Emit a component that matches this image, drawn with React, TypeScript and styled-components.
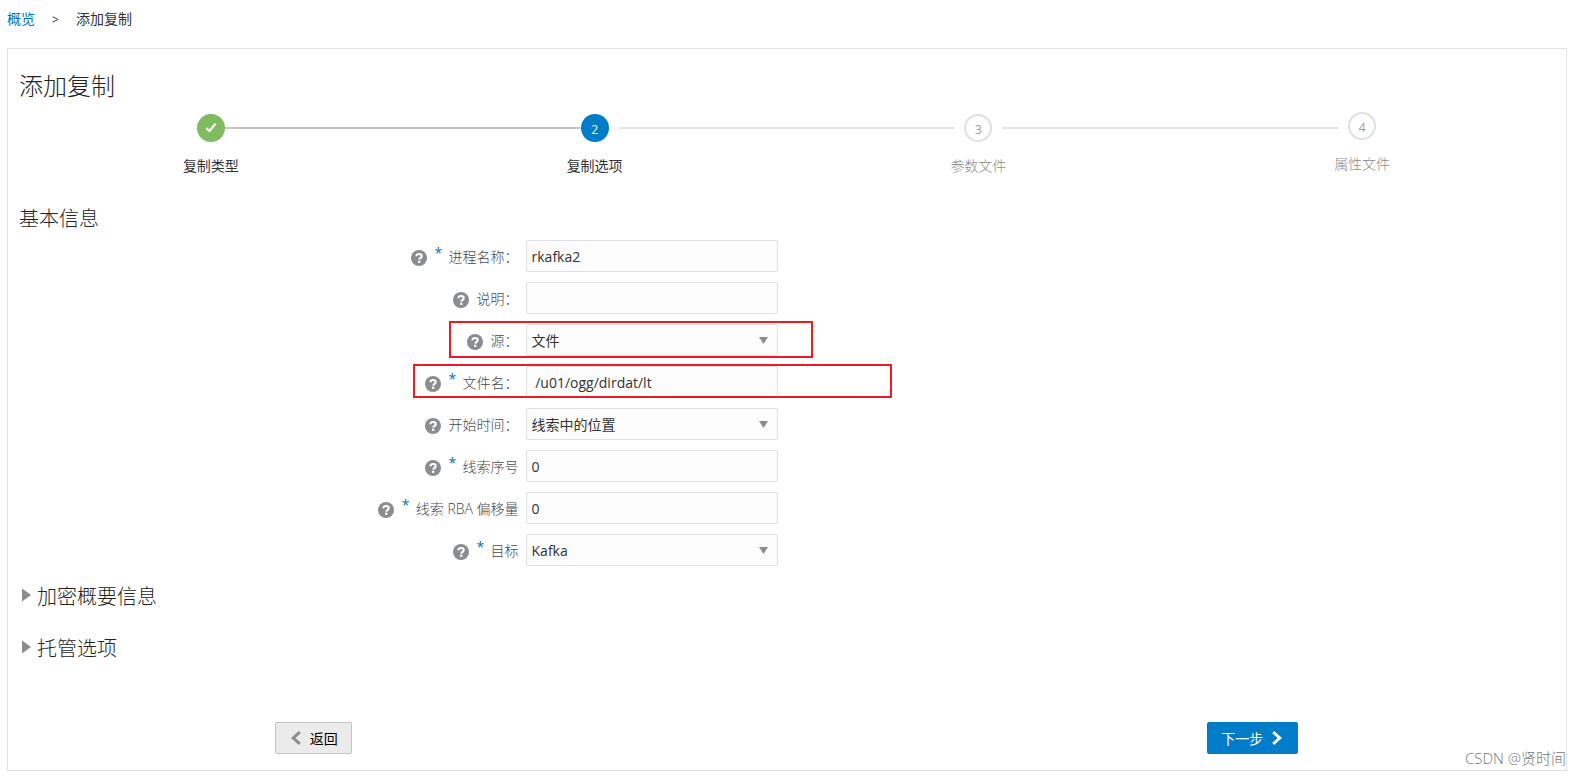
import React, { useState } from "react";
import styled, { createGlobalStyle, css } from "styled-components";

const GlobalStyle = createGlobalStyle`
  *, *::before, *::after { box-sizing: border-box; }
  body {
    margin: 0;
    background: #fff;
    color: #333;
    font-family: "Open Sans", "Noto Sans CJK SC", sans-serif;
    font-size: 14px;
    font-weight: 300;
    line-height: 20px;
  }
  button, input, select { font: inherit; color: inherit; margin: 0; }
  h1, h2, ol { margin: 0; padding: 0; font-weight: 300; }
`;

const Page = styled.div`
  padding: 9px 13px 5px 7px;
`;

const Breadcrumb = styled.nav`
  display: flex;
  align-items: center;
  gap: 16px;
  margin-bottom: 19px;
  font-weight: 400;
`;

const Crumb = styled.a`
  color: #0572b8;
  text-decoration: none;
`;

const Separator = styled.span`
  width: 9px;
  padding-top: 2px;
  font-size: 12px;
  line-height: 18px;
  text-align: center;
`;

const Panel = styled.main`
  position: relative;
  border: 1px solid #dfe1e2;
  padding: 19px 12px 16px 11px;
`;

const Title = styled.h1`
  color: #222;
  font-size: 24px;
  line-height: 36px;
`;

const SectionTitle = styled.h2`
  color: #222;
  font-size: 20px;
  line-height: 28px;
`;

/* Train of steps */
const Train = styled.ol`
  display: flex;
  align-items: flex-start;
  margin: 8px 0 29px;
  list-style: none;
`;

type StepState = "done" | "current" | "todo" | "last";

const isReached = (s: StepState) => s === "done" || s === "current";

const StepItem = styled.li<{ $state: StepState }>`
  flex: 1 1 0;
  min-width: 0;
  display: flex;
  flex-direction: column;
  gap: 14px;
  align-items: center;
  padding-top: ${({ $state }) => ($state === "last" ? 0 : 2)}px;
  color: ${({ $state }) => (isReached($state) ? "#333" : "#8c8c8c")};
`;

const StepTrack = styled.div`
  align-self: stretch;
  display: grid;
  grid-template-columns: 1fr auto 1fr;
  align-items: center;
`;

type Tone = "none" | "dark" | "light";

const toneColor: Record<Tone, string> = {
  none: "transparent",
  dark: "#c4c4c4",
  light: "#e4e4e4",
};

const Connector = styled.span<{ $tone: Tone; $low?: boolean }>`
  height: 2px;
  margin-top: ${({ $low }) => ($low ? 4 : 0)}px;
  background: ${({ $tone }) => toneColor[$tone]};
`;

const LeadConnector = styled(Connector)`
  margin-right: ${({ $tone }) => ($tone === "dark" ? 0 : 10)}px;
`;

const TailConnector = styled(Connector)`
  margin-left: ${({ $tone }) => ($tone === "dark" ? 0 : 10)}px;
`;

const StepDot = styled.span<{ $state: StepState }>`
  display: flex;
  align-items: center;
  justify-content: center;
  width: 28px;
  height: 28px;
  padding-top: ${({ $state }) => ($state === "done" ? 0 : 3)}px;
  border-radius: 50%;
  font-size: 12px;
  line-height: 16px;
  font-weight: 400;
  ${({ $state }) =>
    $state === "done"
      ? css`background: #81bb5f; color: #fff;`
      : $state === "current"
        ? css`background: #007cc8; color: #fff;`
        : css`border: 2px solid #e0e0e0; color: #9a9a9a;`}
`;

const StepLabel = styled.span<{ $strong: boolean }>`
  font-weight: ${({ $strong }) => ($strong ? 400 : 300)};
`;

/* Form */
const Form = styled.form`
  display: flex;
  flex-direction: column;
  gap: 10px;
  margin: 7px 0 17px;
`;

const Row = styled.div`
  display: flex;
  align-items: center;
`;

const LabelCell = styled.div`
  flex: 0 0 33%;
  display: flex;
  justify-content: flex-end;
  align-items: center;
  padding: 2px 7px 0 0;
  color: #45494c;
`;

const HelpButton = styled.button`
  display: block;
  border: 0;
  padding: 0;
  margin: 2px 8px 0 0;
  width: 16px;
  height: 16px;
  background: none;
`;

const Required = styled.span`
  width: 14px;
  height: 20px;
  color: #0572b8;
  font-weight: 400;
  line-height: 12px;
`;

const Control = styled.div`
  position: relative;
  width: 252px;
`;

const field = css`
  display: block;
  width: 100%;
  height: 32px;
  border: 1px solid #dfe1e2;
  border-radius: 2px;
  background: #fcfcfc;
  color: #333;
  font-weight: 400;
  outline: none;
`;

const TextInput = styled.input`
  ${field}
  padding: 0 5px;
`;

const Select = styled.select`
  ${field}
  padding: 2px 5px 0;
  appearance: none;
`;

const Arrow = styled.svg`
  position: absolute;
  right: 10px;
  top: 13px;
  pointer-events: none;
`;

const Highlight = styled.span<{ $wide: boolean }>`
  position: absolute;
  pointer-events: none;
  border: 2px solid #ed1c24;
  ${({ $wide }) =>
    $wide
      ? css`left: -113px; top: -2px; width: 479px; height: 34px;`
      : css`left: -77px; top: -3px; width: 364px; height: 37px;`}
`;

/* Collapsed sections */
const Disclosure = styled.button`
  display: flex;
  align-items: center;
  gap: 6px;
  padding: 0 0 0 3px;
  border: 0;
  background: none;
  font-size: 20px;
  line-height: 28px;
`;

const Triangle = styled.svg`
  margin-bottom: 4px;
`;

const Sections = styled.div`
  display: flex;
  flex-direction: column;
  gap: 24px;
`;

const Actions = styled.div`
  display: flex;
  justify-content: space-between;
  margin-top: 59px;
  padding: 0 calc(100% / 6);
`;

const Button = styled.button<{ $primary?: boolean }>`
  display: flex;
  align-items: center;
  gap: 9px;
  height: 32px;
  padding: 0 13px 0 15px;
  border: 1px solid #c4c4c4;
  border-radius: 2px;
  background: #ebebeb;
  color: #000;
  font-weight: 400;
  ${({ $primary }) =>
    $primary &&
    css`
      padding: 0 15px 0 13px;
      border-color: #007cc8;
      background: #007cc8;
      color: #fff;
    `}
`;

const ButtonText = styled.span`
  padding-top: 2px;
`;

const Watermark = styled.span`
  position: absolute;
  right: 0;
  bottom: 2px;
  color: #777;
  font-size: 15px;
`;

const HelpIcon = () => (
  <svg width="16" height="16" viewBox="0 0 16 16" aria-hidden="true" display="block">
    <circle cx="8" cy="8" r="8" fill="#8a8d90" />
    <path d="M5.4 6.300C5.500 4.800 6.600 4 8.100 4c1.600 0 2.600.9 2.600 2.200C10.700 7.700 8.500 7.900 8.300 9.600" fill="none" stroke="#fff" strokeWidth="2.100" />
    <rect x="7.100" y="10.700" width="2.200" height="2.200" fill="#fff" />
  </svg>
);

const CheckIcon = () => (
  <svg width="14" height="14" viewBox="0 0 14 14" aria-hidden="true">
    <path d="M2.200 7.200 5.600 10 11.500 2.600" fill="none" stroke="#fff" strokeWidth="2.200" />
  </svg>
);

const Chevron = ({ left }: { left?: boolean }) => (
  <svg width="10" height="14" viewBox="0 0 10 14" aria-hidden="true">
    <path
      d={left ? "M8.800 1.200 2.300 7l6.500 5.800" : "M1.200 1.200 7.700 7l-6.500 5.800"}
      fill="none"
      stroke={left ? "#8a8d90" : "#fff"}
      strokeWidth="3"
    />
  </svg>
);

const steps: { label: string; state: StepState }[] = [
  { label: "复制类型", state: "done" },
  { label: "复制选项", state: "current" },
  { label: "参数文件", state: "todo" },
  { label: "属性文件", state: "last" },
];

type FieldSpec = {
  id: string;
  label: string;
  value: string;
  required?: boolean;
  select?: boolean;
  mark?: "narrow" | "wide";
};

const fields: FieldSpec[] = [
  { id: "process", label: "进程名称：", value: "rkafka2", required: true },
  { id: "description", label: "说明：", value: "" },
  { id: "source", label: "源：", value: "文件", select: true, mark: "narrow" },
  { id: "file", label: "文件名：", value: " /u01/ogg/dirdat/lt", required: true, mark: "wide" },
  { id: "begin", label: "开始时间：", value: "线索中的位置", select: true },
  { id: "sequence", label: "线索序号", value: "0", required: true },
  { id: "offset", label: "线索 RBA 偏移量", value: "0", required: true },
  { id: "target", label: "目标", value: "Kafka", required: true, select: true },
];

const FormRow = ({ spec }: { spec: FieldSpec }) => (
  <Row>
    <LabelCell>
      <HelpButton type="button" aria-label={`${spec.label} 帮助`}>
        <HelpIcon />
      </HelpButton>
      {spec.required && <Required aria-hidden="true">*</Required>}
      <label htmlFor={spec.id}>{spec.label}</label>
    </LabelCell>
    <Control>
      {spec.select ? (
        <>
          <Select id={spec.id} defaultValue={spec.value}>
            <option>{spec.value}</option>
          </Select>
          <Arrow width="9" height="7" viewBox="0 0 9 7" aria-hidden="true">
            <path d="M0 0h9L4.500 7z" fill="#8a8d90" />
          </Arrow>
        </>
      ) : (
        <TextInput id={spec.id} type="text" defaultValue={spec.value} />
      )}
      {spec.mark && <Highlight $wide={spec.mark === "wide"} />}
    </Control>
  </Row>
);

const CollapsedSection = ({ title }: { title: string }) => {
  const [open, setOpen] = useState(false);
  return (
    <SectionTitle>
      <Disclosure type="button" aria-expanded={open} onClick={() => setOpen(!open)}>
        <Triangle width="9" height="14" viewBox="0 0 9 14" aria-hidden="true">
          <path d={open ? "M0 3h9L4.500 10z" : "M0 0.500 9 7 0 13.500z"} fill="#8a8d90" />
        </Triangle>
        {title}
      </Disclosure>
    </SectionTitle>
  );
};

export default function App() {
  return (
    <>
      <GlobalStyle />
      <Page lang="zh-CN">
        <Breadcrumb>
          <Crumb href="#overview">概览</Crumb>
          <Separator>&gt;</Separator>
          <span>添加复制</span>
        </Breadcrumb>
        <Panel>
          <Title>添加复制</Title>
          <Train>
            {steps.map(({ label, state }, i) => (
              <StepItem key={label} $state={state}>
                <StepTrack>
                  <LeadConnector
                    $tone={i === 0 ? "none" : state === "current" ? "dark" : "light"}
                    $low={state === "last"}
                  />
                  <StepDot $state={state}>{state === "done" ? <CheckIcon /> : i + 1}</StepDot>
                  <TailConnector
                    $tone={state === "last" ? "none" : state === "done" ? "dark" : "light"}
                  />
                </StepTrack>
                <StepLabel $strong={isReached(state)}>{label}</StepLabel>
              </StepItem>
            ))}
          </Train>
          <SectionTitle>基本信息</SectionTitle>
          <Form onSubmit={(e) => e.preventDefault()}>
            {fields.map((spec) => (
              <FormRow key={spec.id} spec={spec} />
            ))}
          </Form>
          <Sections>
            <CollapsedSection title="加密概要信息" />
            <CollapsedSection title="托管选项" />
          </Sections>
          <Actions>
            <Button type="button">
              <Chevron left />
              <ButtonText>返回</ButtonText>
            </Button>
            <Button type="button" $primary>
              <ButtonText>下一步</ButtonText>
              <Chevron />
            </Button>
          </Actions>
          <Watermark>CSDN @贤时间</Watermark>
        </Panel>
      </Page>
    </>
  );
}
